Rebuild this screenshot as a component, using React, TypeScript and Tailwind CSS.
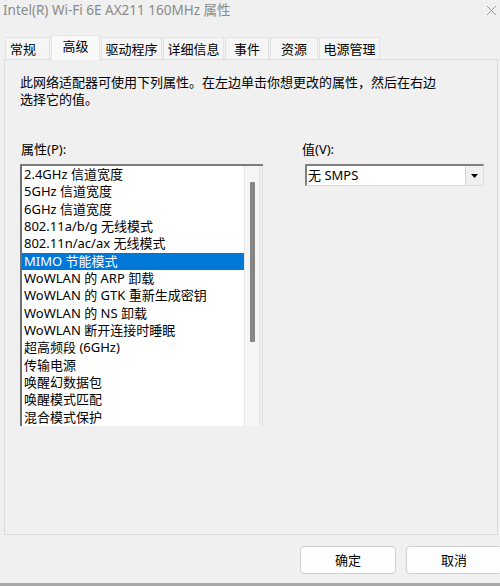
import React, { useState } from 'react';

const tabs = [
  { label: '常规', w: 'w-[45px]' },
  { label: '高级', w: 'w-[49px]' },
  { label: '驱动程序', w: 'w-[61px]' },
  { label: '详细信息', w: 'w-[61px]' },
  { label: '事件', w: 'w-[44px]' },
  { label: '资源', w: 'w-[48px]' },
  { label: '电源管理', w: 'w-[61px]' },
];

const properties = [
  '2.4GHz 信道宽度',
  '5GHz 信道宽度',
  '6GHz 信道宽度',
  '802.11a/b/g 无线模式',
  '802.11n/ac/ax 无线模式',
  'MIMO 节能模式',
  'WoWLAN 的 ARP 卸载',
  'WoWLAN 的 GTK 重新生成密钥',
  'WoWLAN 的 NS 卸载',
  'WoWLAN 断开连接时睡眠',
  '超高频段 (6GHz)',
  '传输电源',
  '唤醒幻数据包',
  '唤醒模式匹配',
  '混合模式保护',
];

const font = { fontFamily: '"Noto Sans", "Noto Sans CJK SC", sans-serif' };

export default function App() {
  const [selected, setSelected] = useState(5);
  const [tab] = useState(1);

  return (
    <div
      className="w-[500px] h-[586px] bg-[#f0f0f0] flex flex-col overflow-hidden text-[13px] text-black"
      style={font}
    >
      {/* TITLE BAR */}
      <div className="h-[34px] flex items-start justify-between pl-[3px] pr-[3px] shrink-0">
        <span className="text-[13.5px] leading-[20px] text-[#8a8a8a]">Intel(R) Wi-Fi 6E AX211 160MHz 属性</span>
        <svg width="11" height="11" viewBox="0 0 11 11" className="mt-[5px]">
          <path d="M1 1 L10 10 M10 1 L1 10" stroke="#9a9a9a" strokeWidth="1" />
        </svg>
      </div>

      {/* TABS */}
      <div className="h-[25px] flex items-end pl-[5px] shrink-0 gap-[1px]">
        {tabs.map((t, i) =>
          i === tab ? (
            <div
              key={t.label}
              className={`${t.w} h-[25px] bg-[#f9f9f9] border-x border-t border-[#e6e6e6] flex justify-center items-start pt-[1px] leading-[18px] relative -mb-px z-10 shrink-0`}
            >
              {t.label}
            </div>
          ) : (
            <div
              key={t.label}
              className={`${t.w} h-[22px] bg-[#f5f5f5] border-x border-t border-[#e3e3e3] flex items-center leading-[18px] shrink-0 ${
                i === 0 ? 'pl-[4px]' : 'justify-center'
              }`}
            >
              {t.label}
            </div>
          )
        )}
      </div>

      {/* PANEL */}
      <div className="ml-[4px] w-[494px] h-[476px] shrink-0 border border-[#dcdcdc] bg-[#f0f0f0] pl-[15px] pt-[14px]">
        <p className="leading-[17px]">
          此网络适配器可使用下列属性。在左边单击你想更改的属性，然后在右边
          <br />
          选择它的值。
        </p>

        <div className="flex mt-[33px]">
          {/* Properties */}
          <div className="w-[243px] flex flex-col">
            <span className="leading-[17px] ml-px">属性(P):</span>
            <div className="mt-[6px] flex border-t-2 border-l-2 border-t-[#7c7c7c] border-l-[#6e6e6e] h-[262px]">
              <div className="flex-1 bg-white flex flex-col">
                {properties.map((p, i) => (
                  <div
                    key={p}
                    onClick={() => setSelected(i)}
                    className={`h-[17.35px] leading-[17.35px] pl-[2px] whitespace-nowrap cursor-default ${
                      i === selected ? 'bg-[#0078d7] text-white' : ''
                    }`}
                  >
                    {p}
                  </div>
                ))}
              </div>
              <div className="w-[15px] border-l border-[#e6e6e6] bg-[#f5f5f5] flex justify-center pt-[16px]">
                <div className="w-[5px] h-[160px] bg-[#858585] rounded-[1px]" />
              </div>
              <div className="w-[4px] border-l border-r border-[#e2e2e2]" />
            </div>
          </div>

          {/* Value */}
          <div className="ml-[39px] flex flex-col">
            <span className="leading-[17px]">值(V):</span>
            <div className="mt-[6px] ml-[3px] w-[179px] h-[22px] flex border-t-2 border-l-2 border-t-[#808080] border-l-[#808080] border-b border-r border-b-[#dcdcdc] border-r-[#dcdcdc] bg-white">
              <span className="flex-1 pl-[1px] leading-[19px]">无 SMPS</span>
              <div className="w-[18px] bg-[#f0f0f0] border-l border-[#d4d4d4] flex items-center justify-center">
                <svg width="7" height="4" viewBox="0 0 7 4">
                  <path d="M0 0 H7 L3.5 4 Z" fill="#000" />
                </svg>
              </div>
            </div>
          </div>
        </div>
      </div>

      {/* BUTTONS */}
      <div className="flex-1 flex items-start pl-[300px] pt-[11px] gap-[10px]">
        <button className="w-[96px] h-[28px] bg-[#fdfdfd] border border-[#d0d0d0] rounded-[4px] leading-[26px] shrink-0">
          确定
        </button>
        <button className="w-[96px] h-[28px] bg-[#fdfdfd] border border-[#d0d0d0] rounded-[4px] leading-[26px] shrink-0">
          取消
        </button>
      </div>
      <div className="h-[3px] bg-[#a8a8a8] shrink-0" />
    </div>
  );
}
